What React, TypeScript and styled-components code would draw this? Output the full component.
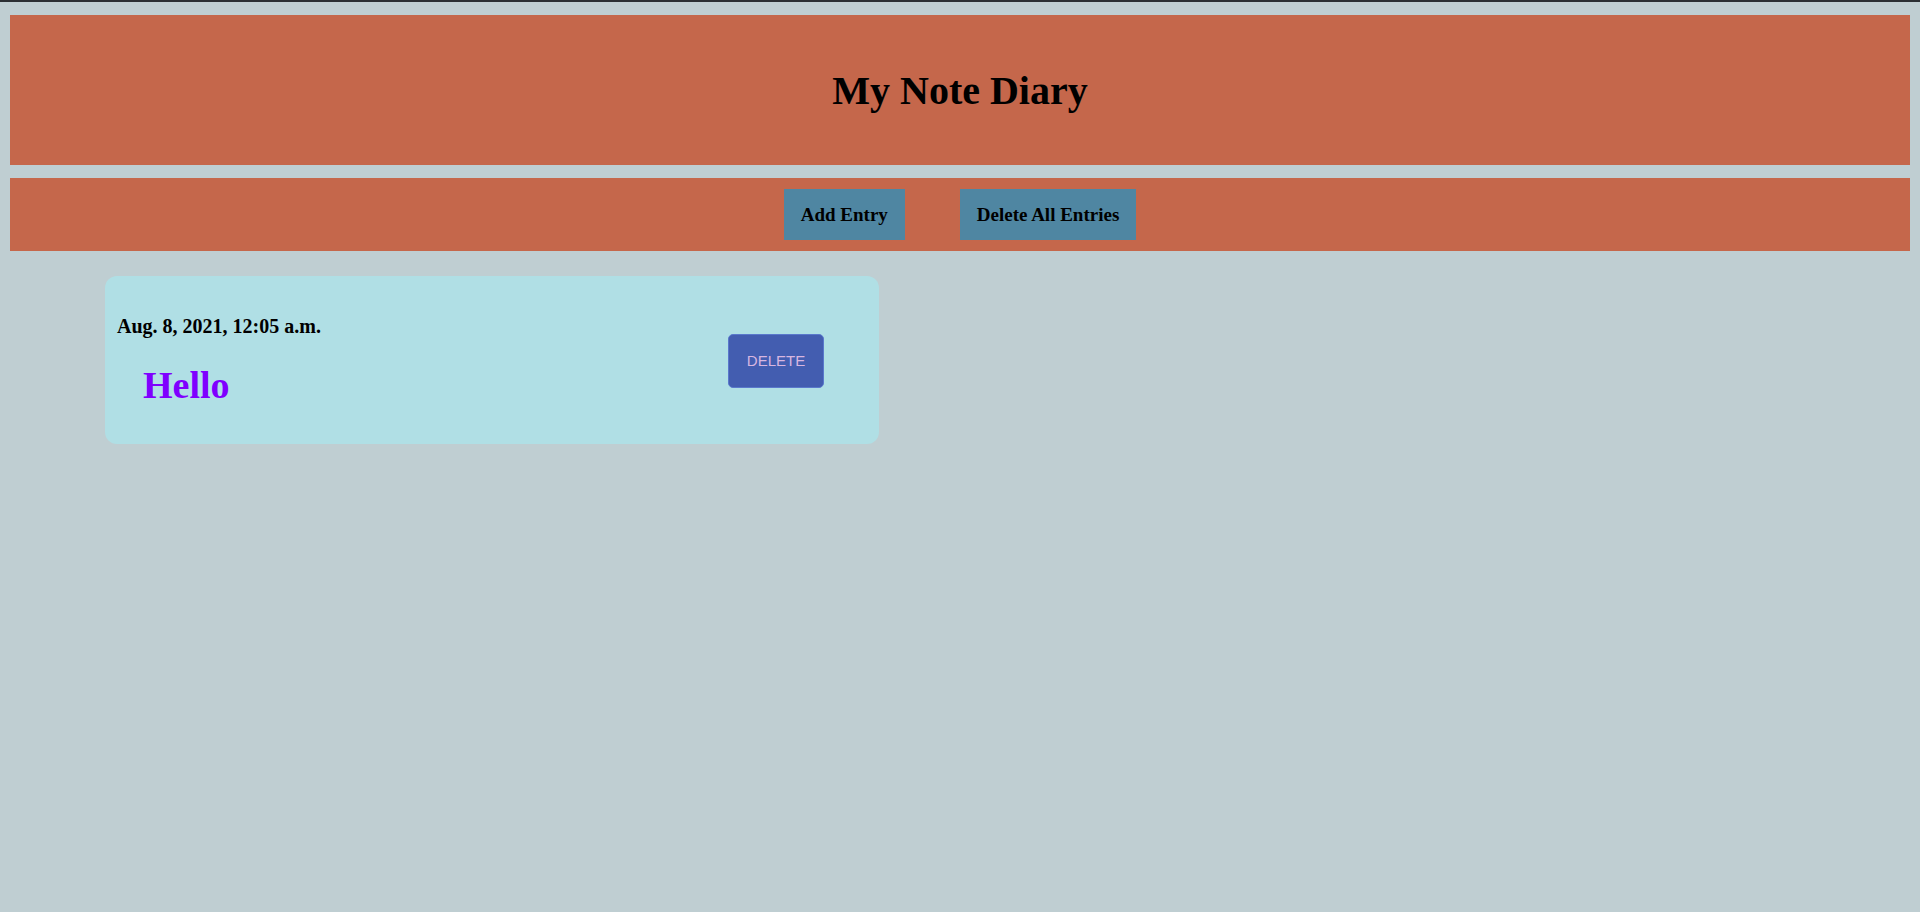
import React, { useState } from "react";
import styled, { createGlobalStyle } from "styled-components";

const GlobalStyle = createGlobalStyle`
  html, body {
    margin: 0;
    padding: 0;
    background-color: #bfced2;
    font-family: "Liberation Serif", "Times New Roman", serif;
  }
`;

const TopStrip = styled.div`
  height: 2px;
  background-color: #2b2f33;
`;

const Page = styled.div`
  padding: 13px 10px 0;
  min-height: 910px;
  box-sizing: border-box;
`;

const Header = styled.header`
  height: 150px;
  background-color: #c5674b;
  display: flex;
  align-items: center;
  justify-content: center;
`;

const Title = styled.h1`
  margin: 0;
  font-size: 40px;
  font-weight: bold;
  color: #000;
`;

const NavBar = styled.nav`
  margin-top: 13px;
  height: 73px;
  background-color: #c5674b;
  display: flex;
  align-items: center;
  justify-content: center;
  gap: 55px;
`;

const NavButton = styled.button`
  height: 51px;
  padding: 0 17px;
  border: none;
  background-color: #4f86a2;
  font-family: "Liberation Serif", "Times New Roman", serif;
  font-size: 19px;
  font-weight: bold;
  color: #000;
  cursor: pointer;
`;

const EntryList = styled.div`
  padding: 25px 0 0 95px;
`;

const EntryCard = styled.div`
  width: 774px;
  box-sizing: border-box;
  padding: 38px 55px 37px 12px;
  background-color: #b0dfe5;
  border-radius: 12px;
  display: flex;
  align-items: center;
  justify-content: space-between;
`;

const EntryText = styled.div`
  display: flex;
  flex-direction: column;
  gap: 25px;
`;

const EntryDate = styled.h4`
  margin: 0;
  font-size: 20px;
  line-height: 24px;
  font-weight: bold;
  color: #000;
`;

const EntryBody = styled.h2`
  margin: 0 0 0 26px;
  font-size: 38px;
  line-height: 44px;
  font-weight: bold;
  color: #7f00ff;
`;

const DeleteButton = styled.button`
  width: 96px;
  height: 54px;
  border: 1px solid #5a78cc;
  border-radius: 5px;
  background-color: #435db0;
  color: #d8b6e0;
  font-family: "Liberation Sans", Arial, sans-serif;
  font-size: 15px;
  cursor: pointer;
`;

type Entry = { id: number; date: string; text: string };

export default function App() {
  const [entries, setEntries] = useState<Entry[]>([
    { id: 1, date: "Aug. 8, 2021, 12:05 a.m.", text: "Hello" },
  ]);

  const removeEntry = (id: number) => {
    setEntries(entries.filter((e) => e.id !== id));
  };

  return (
    <>
      <GlobalStyle />
      <TopStrip />
      <Page>
        <Header>
          <Title>My Note Diary</Title>
        </Header>
        <NavBar>
          <NavButton>Add Entry</NavButton>
          <NavButton onClick={() => setEntries([])}>Delete All Entries</NavButton>
        </NavBar>
        <EntryList>
          {entries.map((entry) => (
            <EntryCard key={entry.id}>
              <EntryText>
                <EntryDate>{entry.date}</EntryDate>
                <EntryBody>{entry.text}</EntryBody>
              </EntryText>
              <DeleteButton onClick={() => removeEntry(entry.id)}>DELETE</DeleteButton>
            </EntryCard>
          ))}
        </EntryList>
      </Page>
    </>
  );
}
